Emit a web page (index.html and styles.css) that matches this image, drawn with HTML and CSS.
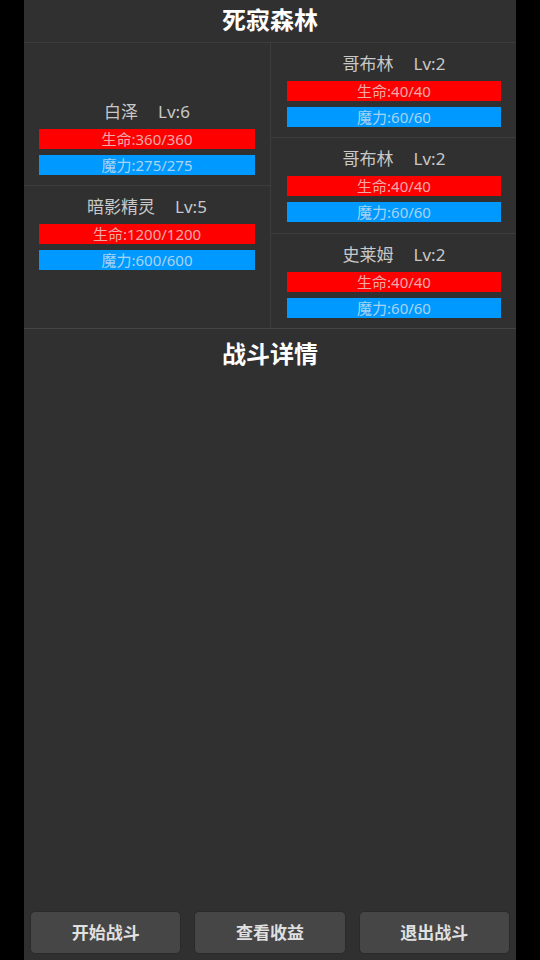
FILE: index.html
```html
<!DOCTYPE html>
<html lang="zh">
<head>
  <meta charset="UTF-8">
  <meta name="viewport" content="width=device-width, initial-scale=1.0">
  <title>死寂森林</title>
  <link rel="stylesheet" href="styles.css">
</head>
<body>
  <div class="app">
    <div class="title">死寂森林</div>
    <div class="field">
      <!-- 我方 -->
      <div class="side left">
        <div class="unit">
          <div class="name">白泽<span class="lv">Lv:6</span></div>
          <div class="bar hp">生命:360/360</div>
          <div class="bar mp">魔力:275/275</div>
        </div>
        <div class="unit">
          <div class="name">暗影精灵<span class="lv">Lv:5</span></div>
          <div class="bar hp">生命:1200/1200</div>
          <div class="bar mp">魔力:600/600</div>
        </div>
      </div>
      <!-- 敌方 -->
      <div class="side right">
        <div class="unit">
          <div class="name">哥布林<span class="lv">Lv:2</span></div>
          <div class="bar hp">生命:40/40</div>
          <div class="bar mp">魔力:60/60</div>
        </div>
        <div class="unit">
          <div class="name">哥布林<span class="lv">Lv:2</span></div>
          <div class="bar hp">生命:40/40</div>
          <div class="bar mp">魔力:60/60</div>
        </div>
        <div class="unit">
          <div class="name">史莱姆<span class="lv">Lv:2</span></div>
          <div class="bar hp">生命:40/40</div>
          <div class="bar mp">魔力:60/60</div>
        </div>
      </div>
    </div>
    <div class="log-title">战斗详情</div>
    <div class="log"></div>
    <div class="btns">
      <div class="btn">开始战斗</div>
      <div class="btn">查看收益</div>
      <div class="btn">退出战斗</div>
    </div>
  </div>
</body>
</html>
```

FILE: styles.css
```css
html, body{
  margin: 0;
  padding: 0;
  background-color: #000;
}
body{
  font-family: "Noto Sans", "Noto Sans CJK SC", sans-serif;
}
.app{
  width: 492px;
  height: 960px;
  margin: 0 auto;
  background-color: #303030;
  display: flex;
  flex-direction: column;
}
.title{
  height: 42px;
  line-height: 40px;
  text-align: center;
  color: #fff;
  font-size: 24px;
  font-weight: bold;
  border-bottom: 1px solid #3c3c3c;
}
.field{
  display: flex;
  height: 285px;
  border-bottom: 1px solid #444;
}
.side{
  display: flex;
  flex-direction: column;
}
.left{
  width: 246px;
  justify-content: center;
  border-right: 1px solid #3c3c3c;
}
.right{
  flex: 1;
}
.right .unit{
  flex: 1;
}
.unit + .unit{
  border-top: 1px solid #3c3c3c;
}
.unit{
  padding: 10px 15px 10px 15px;
}
.right .unit{
  padding: 10px 15px 10px 16px;
}
.name{
  height: 22px;
  line-height: 22px;
  margin-bottom: 6px;
  text-align: center;
  color: #c8c8c8;
  font-size: 17px;
}
.lv{
  margin-left: 20px;
}
.bar{
  height: 20px;
  line-height: 20px;
  text-align: center;
  font-size: 15px;
  color: rgba(235, 235, 235, 0.72);
}
.bar + .bar{
  margin-top: 6px;
}
.hp{
  background-color: #ff0000;
}
.mp{
  background-color: #0099ff;
}
.log-title{
  padding-top: 8px;
  height: 34px;
  line-height: 34px;
  text-align: center;
  color: #fff;
  font-size: 24px;
  font-weight: bold;
}
.log{
  flex: 1;
}
.btns{
  display: grid;
  grid-template-columns: 1fr 1fr 1fr;
  gap: 13px;
  padding: 0 6px 6px 6px;
}
.btn{
  height: 41px;
  line-height: 41px;
  text-align: center;
  background-color: #464646;
  border: 1px solid #2a2a2a;
  border-radius: 5px;
  color: #e0e0e0;
  font-size: 17px;
  font-weight: bold;
}
```
